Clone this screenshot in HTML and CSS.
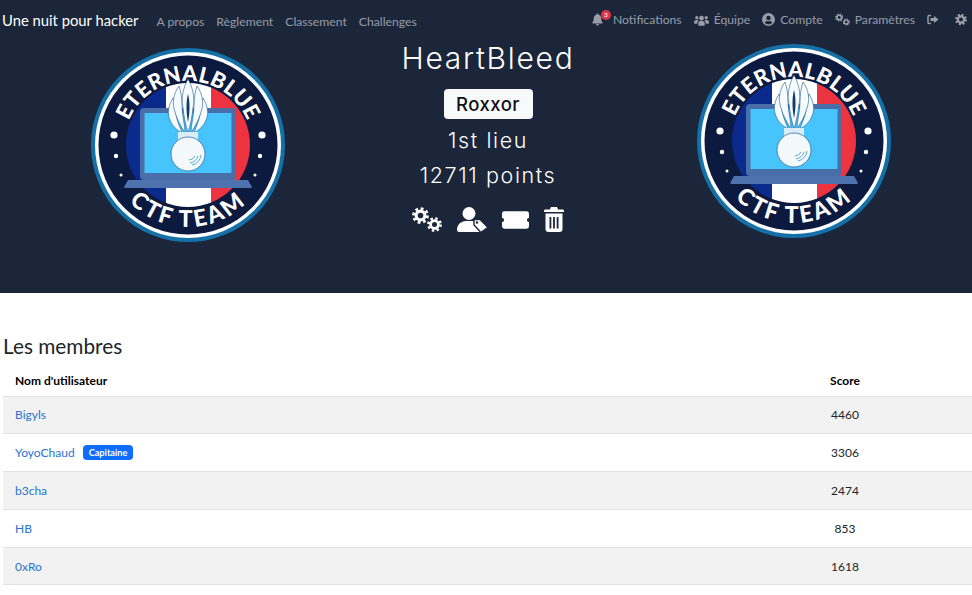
FILE: index.html
```html
<!DOCTYPE html>
<html lang="fr">
<head>
<meta charset="utf-8">
<title>HeartBleed</title>
<link rel="stylesheet" href="styles.css">
</head>
<body>
<svg class="defs" width="0" height="0" aria-hidden="true">
  <defs>
    <symbol id="logo" viewBox="0 0 194 194">
      <circle cx="97" cy="97" r="97" fill="#1670a8"/>
      <circle cx="97" cy="97" r="93" fill="#fff"/>
      <circle cx="97" cy="97" r="89.500" fill="#0c1a40"/>
      <clipPath id="flag"><circle cx="97" cy="97" r="62"/></clipPath>
      <g clip-path="url(#flag)">
        <rect x="35" y="30" width="40" height="135" fill="#0a2a8c"/>
        <rect x="75" y="30" width="45" height="135" fill="#fff"/>
        <rect x="120" y="30" width="44" height="135" fill="#ee3340"/>
      </g>
      <rect x="49" y="60" width="96" height="72" rx="4" fill="#4a6ea8"/>
      <rect x="53.500" y="65" width="87" height="60" fill="#46c4fb"/>
      <path d="M37 132H157L161 139Q161 140 159 140H35Q33 140 33 139Z" fill="#4d72ad"/>
      <g fill="#f4fafd" stroke="#1d5b8c" stroke-width=".6">
        <path d="M82 50C77 58 76 66 79 72C81 78 86 82 91 85C89 78 85 72 85 64C85 58 84 54 82 50Z"/>
        <path d="M112 50C117 58 118 66 115 72C113 78 108 82 103 85C105 78 109 72 109 64C109 58 110 54 112 50Z"/>
        <path d="M88 38C82 46 81 56 84 64C86 72 90 78 94 85C94 76 91 68 91 58C91 50 90 44 88 38Z"/>
        <path d="M106 38C112 46 113 56 110 64C108 72 104 78 100 85C100 76 103 68 103 58C103 50 104 44 106 38Z"/>
        <path d="M97 31C92 40 90 50 92 60C93 70 95 78 97 85C99 78 101 70 102 60C104 50 102 40 97 31Z"/>
      </g>
      <path d="M97 46C95 54 95 64 97 74C99 64 99 54 97 46Z" fill="#123a68"/>
      <rect x="87" y="84" width="20" height="9" fill="#dcecf4"/>
      <circle cx="97" cy="106" r="17" fill="#f3f8fb" stroke="#2e6da3" stroke-width=".8"/>
      <path d="M99 115Q105 114 107 108M101 117Q109 115 110 107M98 112Q102 112 104 108" fill="none" stroke="#4aa3d8" stroke-width=".9"/>
      <path id="arcTop" d="M33 97A64 64 0 0 1 161 97" fill="none"/>
      <path id="arcBottom" d="M15 97A82 82 0 0 0 179 97" fill="none"/>
      <text class="logo-text logo-top"><textPath href="#arcTop" startOffset="50%" text-anchor="middle">ETERNALBLUE</textPath></text>
      <text class="logo-text logo-bottom"><textPath href="#arcBottom" startOffset="50%" text-anchor="middle">CTF TEAM</textPath></text>
      <circle cx="23" cy="87" r="3.600" fill="#fff"/>
      <circle cx="171" cy="87" r="3.600" fill="#fff"/>
      <circle cx="25" cy="108" r="2.200" fill="#fff"/>
      <circle cx="169" cy="108" r="2.200" fill="#fff"/>
      <circle cx="30" cy="127" r="1.500" fill="#fff"/>
      <circle cx="164" cy="127" r="1.500" fill="#fff"/>
    </symbol>
    <symbol id="gear" viewBox="0 0 24 24">
      <circle cx="12" cy="12" r="6.200" fill="none" stroke="currentColor" stroke-width="4.400"/>
      <circle cx="12" cy="12" r="9.800" fill="none" stroke="currentColor" stroke-width="4" stroke-dasharray="3.850 3.850"/>
    </symbol>
    <symbol id="cogs" viewBox="0 0 30 25">
      <use href="#gear" x="0" y="0" width="17" height="17"/>
      <use href="#gear" x="15" y="10" width="15" height="15"/>
    </symbol>
    <symbol id="users" viewBox="0 0 32 24">
      <circle cx="6" cy="7" r="3.600" fill="currentColor"/>
      <circle cx="26" cy="7" r="3.600" fill="currentColor"/>
      <circle cx="16" cy="8" r="5" fill="currentColor"/>
      <path d="M0 18Q0 12 5 12H8Q9 12 10 13Q7 15 7 20H2Q0 20 0 18ZM32 18Q32 12 27 12H24Q23 12 22 13Q25 15 25 20H30Q32 20 32 18ZM9 22Q9 14 13 14H19Q23 14 23 22Q23 24 21 24H11Q9 24 9 22Z" fill="currentColor"/>
    </symbol>
    <symbol id="account" viewBox="0 0 24 24">
      <path fill-rule="evenodd" d="M12 0A12 12 0 1 0 12 24A12 12 0 1 0 12 0ZM12 5A4.200 4.200 0 1 1 12 13.400A4.200 4.200 0 1 1 12 5ZM12 21A9 9 0 0 1 5 17.600C6 15.600 8 14.600 9.500 14.600C10.500 15 11 15.200 12 15.200C13 15.200 13.500 15 14.500 14.600C16 14.600 18 15.600 19 17.600A9 9 0 0 1 12 21Z" fill="currentColor"/>
    </symbol>
    <symbol id="bell" viewBox="0 0 22 24">
      <path d="M11 0Q13 0 13 2.500C17 3.500 18.500 6.500 18.500 10C18.500 15 20 16.500 21.500 18Q22 20 20 20H2Q0 20 .5 18C2 16.500 3.500 15 3.500 10C3.500 6.500 5 3.500 9 2.500Q9 0 11 0ZM8 21H14Q14 24 11 24Q8 24 8 21Z" fill="currentColor"/>
    </symbol>
    <symbol id="signout" viewBox="0 0 24 20">
      <path d="M8 2H4Q2 2 2 4V16Q2 18 4 18H8" fill="none" stroke="currentColor" stroke-width="3"/>
      <path d="M14 3L23 10L14 17V13H7V7H14Z" fill="currentColor"/>
    </symbol>
    <symbol id="usertag" viewBox="0 0 30 25">
      <circle cx="12" cy="6.500" r="6.500" fill="currentColor"/>
      <path d="M0 22.500C0 18 4 14 9 14H15C20 14 25 18 25 22.500Q25 25 22.500 25H2.500Q0 25 0 22.500Z" fill="currentColor"/>
      <path d="M17 12.500H23L30 19.500Q30.500 20.500 30 21L24.500 25Q23.500 25.500 23 24.500L17 18Z" fill="currentColor" stroke="#1b263b" stroke-width="1.400"/>
      <circle cx="20" cy="15.500" r="1.200" fill="#1b263b"/>
    </symbol>
    <symbol id="ticket" viewBox="0 0 28 18">
      <path d="M2.500 0H25.500Q28 0 28 2.500V6.800A2.200 2.200 0 0 0 28 11.200V15.500Q28 18 25.500 18H2.500Q0 18 0 15.500V11.200A2.200 2.200 0 0 0 0 6.800V2.500Q0 0 2.500 0Z" fill="currentColor"/>
    </symbol>
    <symbol id="trash" viewBox="0 0 20 25">
      <path d="M7 0H13L14 2.500H19Q20 2.500 20 4V5H0V4Q0 2.500 1 2.500H6Z" fill="currentColor"/>
      <path fill-rule="evenodd" d="M1.500 6.500H18.500V22Q18.500 25 15.500 25H4.500Q1.500 25 1.500 22ZM5.500 10V21.500H7.300V10ZM9.100 10V21.500H10.900V10ZM12.700 10V21.500H14.500V10Z" fill="currentColor"/>
    </symbol>
  </defs>
</svg>

<header class="hero">
  <nav class="navbar">
    <a class="brand" href="#">Une nuit pour hacker</a>
    <ul class="nav-left">
      <li><a href="#">A propos</a></li>
      <li><a href="#">Règlement</a></li>
      <li><a href="#">Classement</a></li>
      <li><a href="#">Challenges</a></li>
    </ul>
    <ul class="nav-right">
      <li><a href="#"><span class="bell-wrap"><svg class="i i-bell"><use href="#bell"/></svg><span class="bell-badge">3</span></span>Notifications</a></li>
      <li><a href="#"><svg class="i i-users"><use href="#users"/></svg>Équipe</a></li>
      <li><a href="#"><svg class="i i-account"><use href="#account"/></svg>Compte</a></li>
      <li><a href="#"><svg class="i i-cogs"><use href="#cogs"/></svg>Paramètres</a></li>
      <li><a href="#"><svg class="i i-signout"><use href="#signout"/></svg></a></li>
      <li class="nav-theme"><a href="#"><svg class="i i-theme"><use href="#gear"/></svg></a></li>
    </ul>
  </nav>
  <div class="team">
    <svg class="logo logo-left"><use href="#logo"/></svg>
    <div class="team-info">
      <h1 class="team-name">HeartBleed</h1>
      <span class="affiliation">Roxxor</span>
      <p class="team-stat team-place">1st lieu</p>
      <p class="team-stat team-points">12711 points</p>
      <div class="team-actions">
        <svg class="act act-cogs"><use href="#cogs"/></svg>
        <svg class="act act-user"><use href="#usertag"/></svg>
        <svg class="act act-ticket"><use href="#ticket"/></svg>
        <svg class="act act-trash"><use href="#trash"/></svg>
      </div>
    </div>
    <svg class="logo logo-right"><use href="#logo"/></svg>
  </div>
</header>

<main class="members">
  <h2 class="members-title">Les membres</h2>
  <table class="table">
    <thead>
      <tr><th>Nom d'utilisateur</th><th class="score">Score</th></tr>
    </thead>
    <tbody>
      <tr><td><a href="#">Bigyls</a></td><td class="score">4460</td></tr>
      <tr><td><a href="#">YoyoChaud</a><span class="captain">Capitaine</span></td><td class="score">3306</td></tr>
      <tr><td><a href="#">b3cha</a></td><td class="score">2474</td></tr>
      <tr><td><a href="#">HB</a></td><td class="score">853</td></tr>
      <tr><td><a href="#">0xRo</a></td><td class="score">1618</td></tr>
    </tbody>
  </table>
</main>
</body>
</html>
```

FILE: styles.css
```css
* { box-sizing: border-box; }
html, body { margin: 0; padding: 0; }
body {
  font-family: "Lato", "Liberation Sans", sans-serif;
  font-size: 12px;
  color: #212529;
  background: #fff;
  height: 595px;
  overflow: hidden;
}
a { text-decoration: none; }
ul { list-style: none; margin: 0; padding: 0; }
.defs { position: absolute; }

.hero {
  height: 293px;
  background: #1b263b;
  color: #fff;
}
.navbar {
  display: flex;
  align-items: center;
  height: 40px;
  padding: 0 5px 0 2px;
}
.brand { color: #fff; font-size: 14.800px; margin-right: 18px; }
.nav-left, .nav-right { display: flex; align-items: center; }
.nav-left { gap: 12px; }
.nav-left a, .nav-right a { color: rgba(255,255,255,.55); display: flex; align-items: center; font-size: 12.200px; }
.nav-left a { padding-top: 2px; }
.nav-right { margin-left: auto; gap: 12px; }
.nav-right a { padding-bottom: 1px; }
.nav-theme { margin-left: 4px; }
.i { display: block; margin-right: 5px; color: rgba(255,255,255,.55); }
.i-bell { width: 11px; height: 13px; margin-right: 0; }
.bell-wrap { position: relative; display: block; width: 21px; }
.bell-badge {
  position: absolute;
  top: -3px;
  left: 9px;
  width: 10px;
  height: 10px;
  border-radius: 50%;
  background: #dc3545;
  color: #fff;
  font-size: 6.500px;
  line-height: 10px;
  text-align: center;
}
.i-users { width: 15px; height: 12px; }
.i-account { width: 13px; height: 13px; }
.i-cogs { width: 15px; height: 13px; }
.i-signout { width: 12px; height: 11px; margin-right: 0; }
.i-theme { width: 12px; height: 13px; margin-right: 0; }

.team {
  display: flex;
  justify-content: space-between;
  align-items: flex-start;
  padding: 0 81px 0 91px;
}
.logo { display: block; width: 194px; height: 194px; flex: none; }
.logo-left { margin-top: 8px; }
.logo-right { margin-top: 4px; }
.logo-text { font-family: "Lato", sans-serif; font-weight: 900; fill: #fff; }
.logo-top { font-size: 21.500px; letter-spacing: .3px; }
.logo-bottom { font-size: 23px; letter-spacing: 2.500px; }

.team-info {
  display: flex;
  flex-direction: column;
  align-items: center;
  position: relative;
  left: -3px;
  width: 220px;
}
.team-name {
  margin: 0;
  font-family: "Inter", sans-serif;
  font-weight: 300;
  font-size: 30px;
  line-height: 36px;
  letter-spacing: 1.700px;
}
.affiliation {
  margin-top: 13px;
  background: #f8f9fa;
  color: #111;
  border-radius: 4px;
  font-family: "Inter", sans-serif;
  font-weight: 500;
  font-size: 18.500px;
  letter-spacing: .5px;
  line-height: 30px;
  width: 89px;
  text-align: center;
}
.team-stat {
  margin: 0;
  font-family: "Inter", sans-serif;
  font-weight: 300;
  font-size: 21.500px;
  letter-spacing: 1.600px;
  line-height: 35px;
}
.team-place { margin-top: 4px; }
.team-actions { display: flex; align-items: center; gap: 15px; margin-top: 14px; }
.act { display: block; color: #fff; }
.act-cogs { width: 30px; height: 25px; }
.act-user { width: 30px; height: 25px; }
.act-ticket { width: 27px; height: 18px; }
.act-trash { width: 20px; height: 25px; }

.members { padding: 39px 0 0 3px; }
.members-title {
  margin: 0;
  font-size: 20.800px;
  font-weight: 400;
  line-height: 28px;
  color: #212529;
}
.table { width: 100%; border-collapse: collapse; table-layout: fixed; margin-top: 6px; }
.table th {
  font-weight: 700;
  color: #000;
  text-align: left;
  font-size: 12px;
  height: 30px;
  padding: 0 12px;
  border-bottom: 1px solid #dee2e6;
}
.table td {
  height: 37.800px;
  padding: 0 12px;
  font-size: 12px;
  color: #212529;
  border-bottom: 1px solid #dee2e6;
}
.table tbody tr:nth-child(odd) td { background: #f2f2f2; }
.table td a { color: #2a73d1; }
.table .score { width: 254px; text-align: center; }
.captain {
  display: inline-block;
  margin-left: 8px;
  padding: 0 6px;
  background: #0d6efd;
  color: #fff;
  font-size: 9.200px;
  font-weight: 700;
  line-height: 15px;
  border-radius: 4px;
  vertical-align: 1px;
}
```
